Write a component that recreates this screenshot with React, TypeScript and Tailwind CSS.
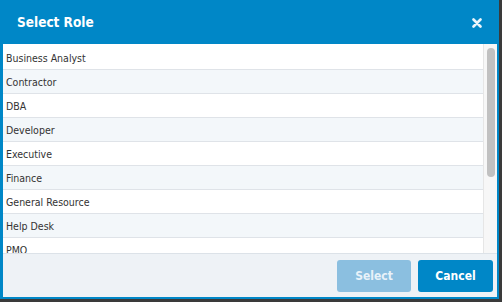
const roles = [
  "Business Analyst",
  "Contractor",
  "DBA",
  "Developer",
  "Executive",
  "Finance",
  "General Resource",
  "Help Desk",
  "PMO",
];

const font = { fontFamily: '"DejaVu Sans Condensed", "DejaVu Sans", sans-serif' };

export default function App() {
  return (
    <div className="w-[502px] h-[302px] bg-[#3a3a3a]" style={font}>
      <div className="w-[499px] h-[299px] flex flex-col border-l-[3px] border-r-[2px] border-b-[2px] border-[#0087c7] bg-white">
        <div className="h-[44px] shrink-0 bg-[#0087c7] flex items-center justify-between pl-[14px] pr-[15px]">
          <span className="text-[13.5px] font-bold text-white">Select Role</span>
          <svg width="10" height="10" viewBox="0 0 10 10" className="mt-[1px]">
            <path d="M1.5 1.5 L8.5 8.5 M8.5 1.5 L1.5 8.5" stroke="#eaf5fb" strokeWidth="2.6" strokeLinecap="round" />
          </svg>
        </div>
        <div className="flex-1 flex min-h-0 overflow-hidden">
          <div className="flex-1 pt-[2px] overflow-hidden">
            {roles.map((r, i) => (
              <div
                key={r}
                className={`h-[24px] flex items-center pl-[3px] pt-[2px] border-b border-[#dfe3e8] text-[10.5px] text-[#333] ${
                  i % 2 === 1 ? "bg-[#f3f7fa]" : "bg-white"
                }`}
              >
                {r}
              </div>
            ))}
          </div>
          <div className="w-[14px] shrink-0 bg-[#f7f7f7] border-l border-[#e6e6e6] pt-[4px] pl-[3px]">
            <div className="w-[8px] h-[129px] rounded-full bg-[#c1c1c1]" />
          </div>
        </div>
        <div className="h-[44px] shrink-0 bg-[#eef2f6] border-t border-[#dce2e8] flex items-center justify-end gap-[7px] pr-[4px]">
          <button className="w-[74px] h-[32px] rounded-[3px] bg-[#8bbfe0] text-[#e8f2f9] text-[12px] font-bold">
            Select
          </button>
          <button className="w-[75px] h-[32px] rounded-[3px] bg-[#0087c7] text-white text-[12px] font-bold">
            Cancel
          </button>
        </div>
      </div>
    </div>
  );
}
